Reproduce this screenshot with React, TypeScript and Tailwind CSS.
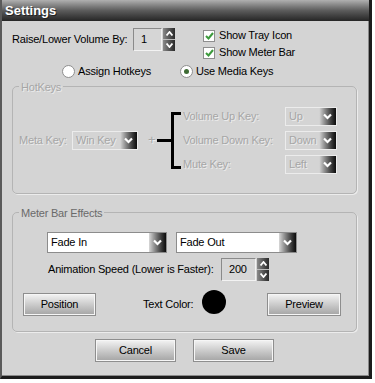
import React from 'react';

const font = "font-['Liberation_Sans',Arial,sans-serif]";
const txt = 'text-[11px] tracking-[-0.2px] whitespace-nowrap';
const disabledText = 'text-[#a6a6a6] [text-shadow:1px_1px_0_#ececec]';

const Chevron: React.FC = () => (
  <svg width="9" height="7" viewBox="0 0 9 7" fill="none">
    <path d="M1 1.5l3.5 3.5L8 1.5" stroke="#ffffff" strokeWidth="2.2" />
  </svg>
);

const Dropdown: React.FC<{ value: string; width: string; height: string; disabled?: boolean }> = ({
  value,
  width,
  height,
  disabled,
}) => (
  <div
    className={`${width} ${height} shrink-0 flex border ${
      disabled ? 'border-[#ececec] bg-[#d4d4d4]' : 'border-[#8c8c8c] bg-white'
    }`}
  >
    <div className={`flex-1 flex items-center pl-[3px] overflow-hidden ${txt} ${disabled ? disabledText : 'text-black'}`}>
      {value}
    </div>
    <div className="w-[17px] flex items-center justify-center bg-gradient-to-r from-[#d8d8d8] via-[#6a6a6a] to-[#0c0c0c]">
      <Chevron />
    </div>
  </div>
);

const Spin: React.FC<{ value: string; width: string }> = ({ value, width }) => (
  <div className="flex items-stretch h-[23px] shrink-0">
    <div
      className={`${width} flex items-center pl-[7px] ${txt} text-black bg-[#d6d6d6] border border-t-[#8a8a8a] border-l-[#8a8a8a] border-r-[#f2f2f2] border-b-[#f2f2f2]`}
    >
      {value}
    </div>
    <div className="w-[12px] ml-[1px] flex flex-col">
      <div className="flex-1 flex items-center justify-center bg-gradient-to-r from-[#8a8a8a] to-[#2a2a2a] border-b border-[#bdbdbd]">
        <svg width="7" height="5" viewBox="0 0 7 5">
          <path d="M0.5 4.5L3.5 1L6.5 4.5" stroke="#fff" strokeWidth="1.8" fill="none" />
        </svg>
      </div>
      <div className="flex-1 flex items-center justify-center bg-gradient-to-r from-[#8a8a8a] to-[#2a2a2a]">
        <svg width="7" height="5" viewBox="0 0 7 5">
          <path d="M0.5 0.5L3.5 4L6.5 0.5" stroke="#fff" strokeWidth="1.8" fill="none" />
        </svg>
      </div>
    </div>
  </div>
);

const Checkbox: React.FC<{ label: string }> = ({ label }) => (
  <div className="flex items-center h-[15px]">
    <div className="w-[12px] h-[12px] bg-white border border-[#8e8e8e] flex items-center justify-center">
      <svg width="9" height="8" viewBox="0 0 9 8">
        <path d="M1 4l2.5 2.5L8 1" stroke="#3c9a3c" strokeWidth="2" fill="none" />
      </svg>
    </div>
    <span className={`ml-[4px] ${txt} text-black`}>{label}</span>
  </div>
);

const Radio: React.FC<{ label: string; checked?: boolean }> = ({ label, checked }) => (
  <div className="flex items-center">
    <div className="w-[13px] h-[13px] rounded-full bg-white border border-[#8e8e8e] flex items-center justify-center">
      {checked && <div className="w-[5px] h-[5px] rounded-full bg-[#3e6b34]" />}
    </div>
    <span className={`ml-[3px] ${txt} text-black`}>{label}</span>
  </div>
);

const Button: React.FC<{ label: string; width: string }> = ({ label, width }) => (
  <div
    className={`${width} h-[21px] shrink-0 flex items-center justify-center ${txt} text-black border border-[#f6f6f6] shadow-[0_0_0_1px_#8e8e8e] bg-gradient-to-b from-[#f0f0f0] to-[#a8a8a8]`}
  >
    {label}
  </div>
);

export default function App() {
  return (
    <div className={`w-[375px] h-[383px] bg-white ${font}`}>
      <div className="w-[372px] h-[379px] flex flex-col bg-[#d4d4d4] border-l-2 border-l-[#5a5a5a] border-r-[3px] border-r-[#1c1c1c] border-b-[3px] border-b-[#1c1c1c] shadow-[inset_-1px_-1px_0_#8a8a8a]">
        <div className="h-[21px] flex items-center pl-[3px] bg-gradient-to-b from-[#b0b0b0] via-[#5c5c5c] to-[#262626]">
          <span className="text-[13px] font-bold text-white [text-shadow:1px_1px_0_#222]">Settings</span>
        </div>

        {/* top options */}
        <div className="flex mt-[6px] ml-[10px]">
          <div className="flex items-center h-[23px] mt-[1px]">
            <span className={`w-[121px] ${txt} text-black`}>Raise/Lower Volume By:</span>
            <Spin value="1" width="w-[29px]" />
          </div>
          <div className="flex flex-col gap-[2px] ml-[28px] mt-[1px]">
            <Checkbox label="Show Tray Icon" />
            <Checkbox label="Show Meter Bar" />
          </div>
        </div>

        <div className="flex items-center mt-[3px] ml-[60px] gap-[29px]">
          <Radio label="Assign Hotkeys" />
          <Radio label="Use Media Keys" checked />
        </div>

        {/* HotKeys group */}
        <fieldset className="mt-[0px] ml-[10px] w-[345px] border border-[#b4b4b4] rounded-[5px] shadow-[1px_1px_0_#ececec] pt-[13px] pb-[19px]">
          <legend className={`ml-[6px] px-[2px] leading-[14px] ${txt} ${disabledText}`}>HotKeys</legend>
          <div className="flex items-center pl-[6px]">
            <span className={`w-[53px] ${txt} ${disabledText}`}>Meta Key:</span>
            <Dropdown value="Win Key" width="w-[66px]" height="h-[19px]" disabled />
            <span className={`ml-[10px] w-[8px] text-[13px] ${disabledText}`}>+</span>
            <svg width="24" height="57" viewBox="0 0 24 57" className="ml-[1px] shrink-0">
              <path d="M0 28.5H15M15.5 0V57M14 1.5H24M14 55.5H24" stroke="#000" strokeWidth="3" fill="none" />
            </svg>
            <div className="flex flex-col gap-[5px] ml-[2px]">
              {[
                ['Volume Up Key:', 'Up'],
                ['Volume Down Key:', 'Down'],
                ['Mute Key:', 'Left'],
              ].map(([label, value]) => (
                <div key={label} className="flex items-center">
                  <span className={`w-[102px] ${txt} ${disabledText}`}>{label}</span>
                  <Dropdown value={value} width="w-[52px]" height="h-[19px]" disabled />
                </div>
              ))}
            </div>
          </div>
        </fieldset>

        {/* Meter Bar Effects group */}
        <fieldset className="mt-[12px] ml-[10px] w-[345px] border border-[#b4b4b4] rounded-[5px] shadow-[1px_1px_0_#ececec] pt-[12px] pb-[16px]">
          <legend className={`ml-[6px] px-[2px] leading-[14px] ${txt} text-[#6a6a6a]`}>Meter Bar Effects</legend>
          <div className="flex ml-[34px] gap-[9px]">
            <Dropdown value="Fade In" width="w-[120px]" height="h-[21px]" />
            <Dropdown value="Fade Out" width="w-[121px]" height="h-[21px]" />
          </div>
          <div className="flex items-center ml-[35px] mt-[5px]">
            <span className={`w-[173px] ${txt} text-black`}>Animation Speed (Lower is Faster):</span>
            <Spin value="200" width="w-[35px]" />
          </div>
          <div className="flex items-start ml-[11px] mt-[9px]">
            <div className="mt-[4px]">
              <Button label="Position" width="w-[71px]" />
            </div>
            <span className={`ml-[48px] mt-[6px] w-[59px] ${txt} text-black`}>Text Color:</span>
            <div className="w-[24px] h-[24px] shrink-0 rounded-full bg-black" />
            <div className="mt-[4px] ml-[42px]">
              <Button label="Preview" width="w-[72px]" />
            </div>
          </div>
        </fieldset>

        <div className="flex mt-[8px] ml-[94px] gap-[19px]">
          <Button label="Cancel" width="w-[79px]" />
          <Button label="Save" width="w-[79px]" />
        </div>
      </div>
    </div>
  );
}
